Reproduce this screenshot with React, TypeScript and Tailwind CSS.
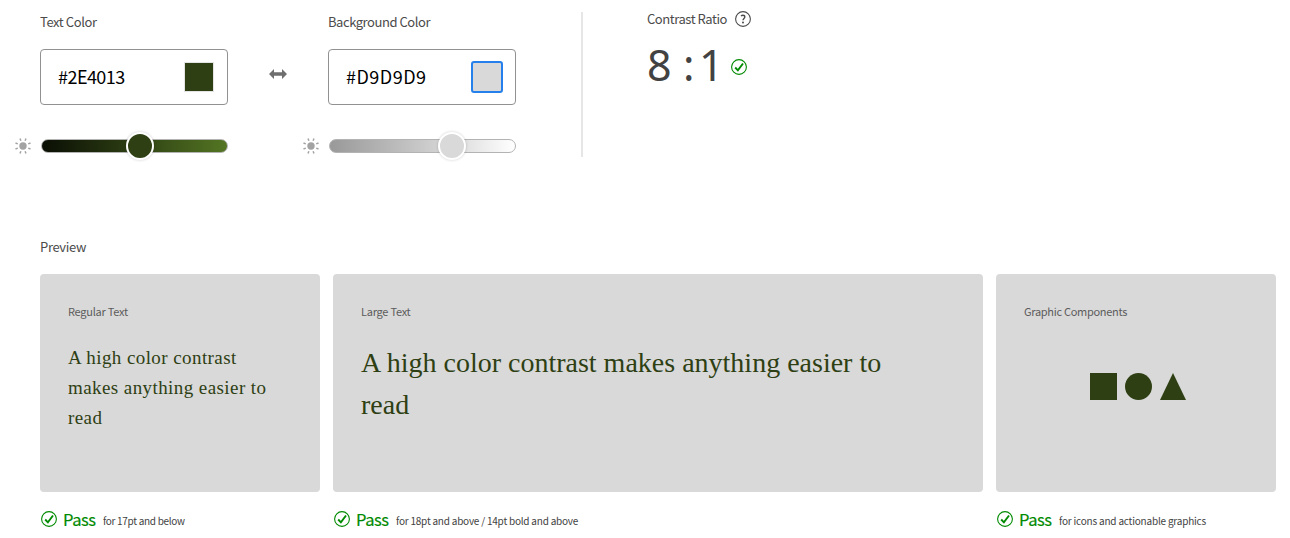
import type { ReactNode } from "react";

function CheckIcon() {
  return (
    <svg width="16" height="16" viewBox="0 0 16 16" fill="none" className="shrink-0">
      <circle cx="8" cy="8" r="7.4" stroke="#008a00" strokeWidth="1.1" />
      <path d="M4.2 8.5 6.9 11.3 12 4.5" stroke="#008a00" strokeWidth="1.9" />
    </svg>
  );
}

function SunIcon() {
  return (
    <svg width="16" height="16" viewBox="0 0 16 16" className="shrink-0">
      <circle cx="8" cy="8" r="3.7" fill="#a3a3a3" />
      <path
        d="M5.9 2.8 5 .5M10.1 2.8l.9-2.3M5.9 13.2 5 15.5M10.1 13.2l.9 2.3M2.8 5.9.5 5M2.8 10.1.5 11M13.2 5.9l2.3-.9M13.2 10.1l2.3.9"
        stroke="#a3a3a3"
        strokeWidth="1.5"
      />
    </svg>
  );
}

function HelpIcon() {
  return (
    <svg width="16" height="16" viewBox="0 0 16 16" fill="none" className="shrink-0">
      <circle cx="8" cy="8" r="7.4" stroke="#4b4b4b" strokeWidth="1.1" />
      <path d="M6 5c.6-.5 1.2-.7 1.9-.7 1.1 0 1.9.6 1.9 1.6 0 1.5-1.8 1.6-1.8 3.4" stroke="#4b4b4b" strokeWidth="1.4" />
      <circle cx="8" cy="11.4" r="1" fill="#4b4b4b" />
    </svg>
  );
}

function SwapIcon() {
  return (
    <svg width="18" height="10" viewBox="0 0 18 10" fill="#6e6e6e">
      <path d="M0 5 5 0v3.2h8V0l5 5-5 5V6.8H5V10z" />
    </svg>
  );
}

interface FieldProps {
  label: string;
  labelClass: string;
  value: string;
  valueClass: string;
  swatch: string;
  track: string;
  thumb: string;
}

function ColorField({ label, labelClass, value, valueClass, swatch, track, thumb }: FieldProps) {
  return (
    <div className="w-[213px] shrink-0">
      <div className={`ml-[25px] h-5 text-[13px] leading-5 whitespace-nowrap ${labelClass}`}>{label}</div>
      <div className="mt-[17px] ml-[25px] flex h-14 w-[188px] items-center justify-between rounded border border-[#919191] pr-3 pl-[17px]">
        <span className={`pb-0.5 text-lg leading-6 text-black ${valueClass}`}>{value}</span>
        <span className={`size-8 ${swatch}`} />
      </div>
      <div className="mt-[27px] flex h-7 items-center">
        <SunIcon />
        <div className={`ml-2.5 flex h-3.5 w-[187px] items-center rounded-full border border-[#b3b3b3] ${track}`}>
          <span className={`size-7 shrink-0 rounded-full border-2 border-white shadow-[0_0_3px_rgba(0,0,0,0.2)] ${thumb}`} />
        </div>
      </div>
    </div>
  );
}

interface CardProps {
  title: string;
  titleClass: string;
  width: string;
  note: string;
  noteClass: string;
  children: ReactNode;
}

function PreviewCard({ title, titleClass, width, note, noteClass, children }: CardProps) {
  return (
    <div className={`shrink-0 ${width}`}>
      <div className="h-[218px] rounded bg-[#d9d9d9] px-7 pt-[27px]">
        <div className={`h-[21px] text-[11px] leading-5 text-[#5c5c5c] ${titleClass}`}>{title}</div>
        {children}
      </div>
      <div className="mt-[15px] ml-px flex h-6 items-center whitespace-nowrap">
        <CheckIcon />
        <span className="ml-1.5 w-8 text-[16.5px] leading-6 text-[#008a00] [-webkit-text-stroke:0.2px_#008a00] tracking-[-0.45px]">Pass</span>
        <span className={`ml-2 pt-1 text-[10px] leading-5 text-[#424242] ${noteClass}`}>{note}</span>
      </div>
    </div>
  );
}

export default function App() {
  return (
    <main className="h-[538px] w-[1290px] overflow-hidden bg-white pt-3 font-['Noto_Sans_CJK_SC',sans-serif] text-[#4b4b4b]">
      <section className="flex h-[145px] pl-[15px]">
        <ColorField
          label="Text Color"
          labelClass="tracking-[-0.4px]"
          value="#2E4013"
          valueClass="tracking-[-0.55px]"
          swatch="border border-[#e1e1e1] bg-[#2e4013] bg-clip-padding scale-[0.94]"
          track="bg-linear-to-r from-[#0b0f05] via-[#2e4013] to-[#547623] pl-[84px]"
          thumb="bg-[#2e4013]"
        />
        <div className="mt-[57px] ml-[41px]">
          <SwapIcon />
        </div>
        <div className="ml-4">
          <ColorField
            label="Background Color"
            labelClass="tracking-[-0.45px]"
            value="#D9D9D9"
            valueClass="tracking-[0.5px]"
            swatch="rounded-[3px] border-2 border-[#2680eb] bg-[#d9d9d9]"
            track="bg-linear-to-r from-[#999999] via-[#c9c9c9] to-white pl-[108px]"
            thumb="bg-[#d9d9d9]"
          />
        </div>
        <div className="ml-[65px] h-[145px] w-0.5 bg-[#e6e6e6]" />
        <div className="-mt-px ml-16">
          <div className="flex h-4 items-center">
            <span className="w-[88px] text-[13px] leading-5 whitespace-nowrap tracking-[-0.45px]">Contrast Ratio</span>
            <HelpIcon />
          </div>
          <div className="mt-3 flex h-14 items-center">
            <span className="w-[84px] pb-1 font-['Noto_Sans',sans-serif] text-[43px] leading-[56px] whitespace-nowrap text-[#424242]">
              <span className="inline-block w-9">8</span>
              <span className="inline-block w-4">:</span>
              <span className="inline-block">1</span>
            </span>
            <CheckIcon />
          </div>
        </div>
      </section>

      <section className="mt-20 pl-10">
        <h2 className="h-5 text-[13px] leading-5 tracking-[-0.35px]">Preview</h2>
        <div className="mt-[17px] flex gap-[13px]">
          <PreviewCard title="Regular Text" titleClass="tracking-[-0.25px]" width="w-[280px]" note="for 17pt and below" noteClass="tracking-[-0.3px]">
            <p className="mt-[21px] font-['Liberation_Serif',serif] text-[19px] leading-[30px] tracking-[0.42px] text-[#2e4013]">
              A high color contrast
              <br />
              makes anything easier to
              <br />
              read
            </p>
          </PreviewCard>
          <PreviewCard
            title="Large Text"
            titleClass="tracking-[-0.25px]"
            width="w-[650px]"
            note="for 18pt and above / 14pt bold and above"
            noteClass="tracking-[-0.22px]"
          >
            <p className="mt-5 font-['Liberation_Serif',serif] text-[28px] leading-[42px] text-[#2e4013]">
              A high color contrast makes anything easier to
              <br />
              read
            </p>
          </PreviewCard>
          <PreviewCard
            title="Graphic Components"
            titleClass="tracking-[-0.3px]"
            width="w-[280px]"
            note="for icons and actionable graphics"
            noteClass="tracking-[-0.2px]"
          >
            <div className="mt-[51px] ml-[66px] flex gap-2">
              <span className="size-[27px] bg-[#2e4013]" />
              <span className="size-[27px] rounded-full bg-[#2e4013]" />
              <svg width="26" height="27" viewBox="0 0 26 27" fill="#2e4013">
                <path d="M13 0 26 27H0z" />
              </svg>
            </div>
          </PreviewCard>
        </div>
      </section>
    </main>
  );
}
